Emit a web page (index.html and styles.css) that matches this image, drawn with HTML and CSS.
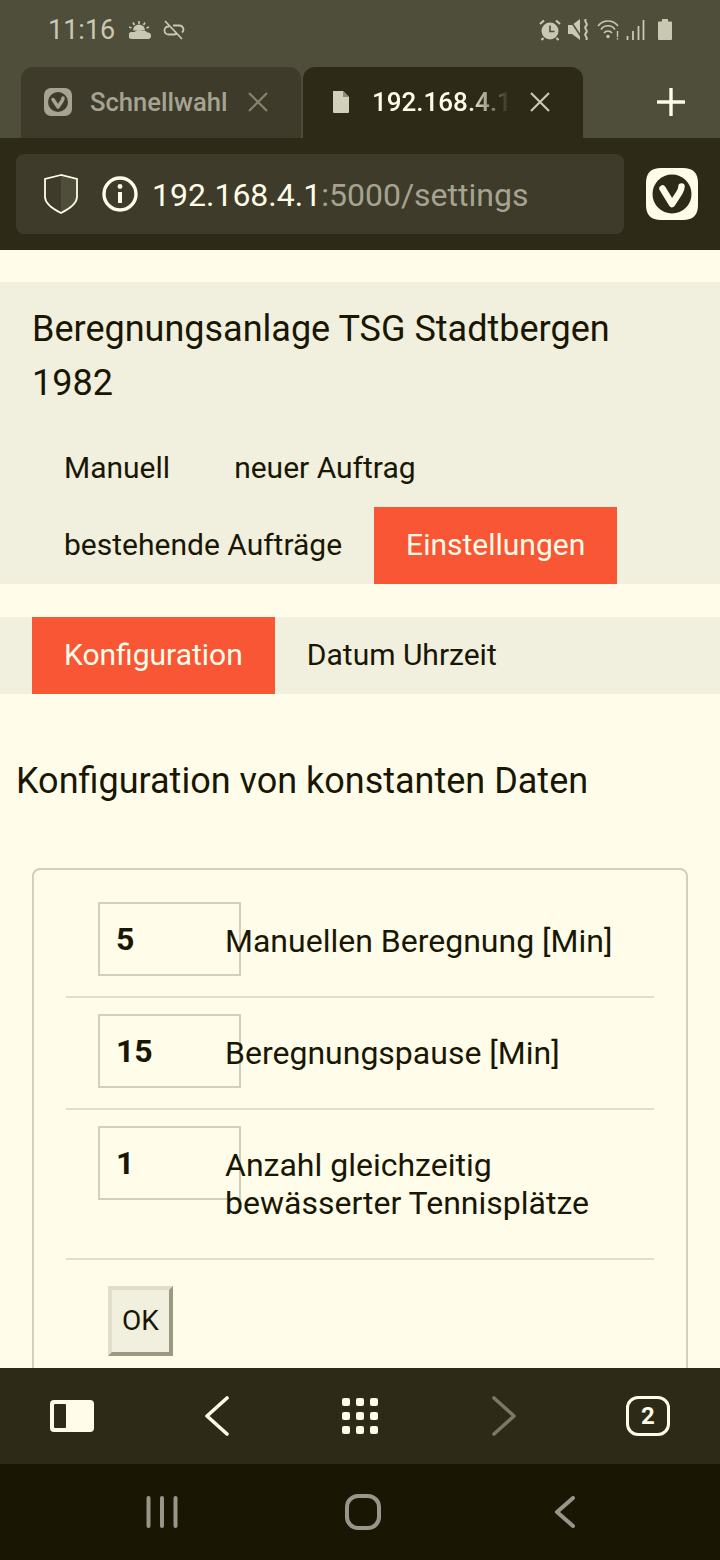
FILE: index.html
```html
<!DOCTYPE html>
<html lang="de">
<head>
  <meta charset="UTF-8" />
  <meta name="viewport" content="width=device-width, initial-scale=1.0"/>
  <title>Beregnungsanlage</title>
  <link rel="stylesheet" href="styles.css">
</head>
<body>
  <div class="phone">
    <div class="statusbar">
      <div class="status-left">
        <span class="clock">11:16</span>
        <svg class="ic-weather" width="22" height="18" viewBox="0 0 22 18"><path d="M10 0v3M4 1.500l1.500 2.500M16 1.500L14.500 4M0 6l2.500 1M20 6l-2.500 1" stroke="#c9c8b2" stroke-width="1.600" fill="none"/><path d="M4 9.500a6 6 0 0 1 12 0z" fill="#c9c8b2"/><path d="M3 18a3.500 3.500 0 0 1 0-7h2.500a6 6 0 0 1 8-1 4.500 4.500 0 0 1 5 1.500 3.300 3.300 0 0 1 1 6.500z" fill="#c9c8b2"/></svg>
        <svg class="ic-link" width="22" height="20" viewBox="0 0 22 20"><path d="M6 6.500H5.500a4 4 0 0 0 0 8H11a4 4 0 0 0 2.500-1M10 5.500h6a4 4 0 0 1 3 7M2 1l17 18" stroke="#c9c8b2" stroke-width="1.800" fill="none"/></svg>
      </div>
      <div class="status-right">
        <svg width="22" height="22" viewBox="0 0 22 22"><circle cx="11" cy="12" r="8.500" fill="#c9c8b2"/><path d="M11 6.500v6h4.500" stroke="#4f4e3b" stroke-width="1.600" fill="none"/><path d="M1 5l4-3.500M21 5l-4-3.500M4.500 19L2.500 21M17.500 19l2 2" stroke="#c9c8b2" stroke-width="2.200" fill="none"/></svg>
        <svg width="22" height="21" viewBox="0 0 22 21"><path d="M0 6h4l8-6v21l-8-6H0z" fill="#c9c8b2"/><path d="M2 1l12 18" stroke="#4f4e3b" stroke-width="1.500"/><path d="M18 0c-3 3 3 4 0 7s3 4 0 7 3 4 0 7" stroke="#c9c8b2" stroke-width="2" fill="none"/></svg>
        <svg width="22" height="20" viewBox="0 0 22 20"><path d="M1 6a12.500 12.500 0 0 1 20 0M4 9.500a8.500 8.500 0 0 1 14 0M7 13a5 5 0 0 1 8 0" stroke="#c9c8b2" stroke-width="1.500" fill="none"/><circle cx="11" cy="16.500" r="1.700" fill="#c9c8b2"/><path d="M20.500 11v6M20.500 18v1.500" stroke="#c9c8b2" stroke-width="1.400"/></svg>
        <svg class="ic-signal" width="19" height="20" viewBox="0 0 19 20"><path d="M1.500 16v4M7 11v9M12.500 6v14M17.500 0v20" stroke="#c9c8b2" stroke-width="1.800"/></svg>
        <svg class="ic-battery" width="14" height="21" viewBox="0 0 14 21"><path d="M4 0h6v2.500h3a1 1 0 0 1 1 1V20a1 1 0 0 1-1 1H1a1 1 0 0 1-1-1V3.500a1 1 0 0 1 1-1h3z" fill="#c9c8b2"/></svg>
      </div>
    </div>

    <div class="tabbar">
      <div class="tab">
        <svg class="favicon" width="28" height="28" viewBox="0 0 28 28"><rect width="28" height="28" rx="7" fill="#a5a493"/><circle cx="14" cy="14" r="10" fill="#3e3b2a"/><path d="M9 11.500l5 7.500 4-6c.7-1 1-2 1-3" stroke="#a5a493" stroke-width="3.500" stroke-linecap="round" stroke-linejoin="round" fill="none"/></svg>
        <span class="tab-title">Schnellwahl</span>
        <svg class="tab-close" width="22" height="22" viewBox="0 0 22 22"><path d="M2 2l18 18M20 2L2 20" stroke="#86846f" stroke-width="2.200"/></svg>
      </div>
      <div class="tab tab-active">
        <svg class="page-ic" width="18" height="22" viewBox="0 0 18 22"><path d="M1 0h10l6 6v15a1 1 0 0 1-1 1H2a1 1 0 0 1-1-1z" fill="#d2d0ba"/><path d="M11 0v6h6" fill="#8e8c78"/></svg>
        <span class="tab-title">192.168.4.1</span>
        <svg class="tab-close" width="22" height="22" viewBox="0 0 22 22"><path d="M2 2l18 18M20 2L2 20" stroke="#c9c8b2" stroke-width="2.200"/></svg>
      </div>
      <div class="newtab">
        <svg width="28" height="28" viewBox="0 0 28 28"><path d="M14 1v26M1 14h26" stroke="#fffde9" stroke-width="3.400" stroke-linecap="round"/></svg>
      </div>
    </div>

    <div class="addressbar">
      <div class="urlfield">
        <svg class="shield" width="34" height="40" viewBox="0 0 34 40"><path d="M17 1L33 5v18c0 7-8 12-16 16z" fill="#4f4e3b"/><path d="M17 1L1 5v18c0 7 8 12 16 16 8-4 16-9 16-16V5z" stroke="#fffde9" stroke-width="1.800" fill="none"/></svg>
        <svg class="info" width="36" height="36" viewBox="0 0 36 36"><circle cx="18" cy="18" r="16" stroke="#fffde9" stroke-width="3.400" fill="none"/><path d="M18 16v11" stroke="#fffde9" stroke-width="4"/><circle cx="18" cy="10.500" r="2.400" fill="#fffde9"/></svg>
        <span class="url"><span class="url-host">192.168.4.1</span>:5000/settings</span>
      </div>
      <svg class="vivaldi" width="52" height="52" viewBox="0 0 52 52"><path d="M15 0h22c10 0 15 5 15 15v22c0 10-5 15-15 15H15C5 52 0 47 0 37V15C0 5 5 0 15 0z" fill="#fffde9"/><circle cx="26" cy="26" r="19.500" fill="#2d2a18"/><path d="M16.500 20.500L26 36l7.500-11.500c1.500-2.500 2-4 2-6" stroke="#fffde9" stroke-width="6.500" stroke-linecap="round" stroke-linejoin="round" fill="none"/></svg>
    </div>

    <main class="page">
      <header class="site-head">
        <h1>Beregnungsanlage TSG Stadtbergen 1982</h1>
        <nav class="menu">
          <a href="#">Manuell</a>
          <a href="#">neuer Auftrag</a>
          <a href="#">bestehende Aufträge</a>
          <a href="#" class="current">Einstellungen</a>
        </nav>
      </header>

      <nav class="menu submenu">
        <a href="#" class="current">Konfiguration</a>
        <a href="#">Datum Uhrzeit</a>
      </nav>

      <h2>Konfiguration von konstanten Daten</h2>

      <form class="config">
        <div class="row">
          <input type="text" value="5" />
          <label>Manuellen Beregnung [Min]</label>
        </div>
        <div class="row">
          <input type="text" value="15" />
          <label>Beregnungspause [Min]</label>
        </div>
        <div class="row">
          <input type="text" value="1" />
          <label>Anzahl gleichzeitig bewässerter Tennisplätze</label>
        </div>
        <button type="button">OK</button>
      </form>
    </main>

    <div class="toolbar">
      <svg width="44" height="32" viewBox="0 0 44 32"><rect width="44" height="32" rx="4" fill="#fffde9"/><rect x="4" y="4" width="12" height="24" rx="1" fill="#2d2a18"/></svg>
      <svg class="tb-back" width="24" height="40" viewBox="0 0 24 40"><path d="M22 2L2 20l20 18" stroke="#fffde9" stroke-width="3.600" stroke-linecap="round" stroke-linejoin="round" fill="none"/></svg>
      <svg class="tb-grid" width="36" height="36" viewBox="0 0 36 36" fill="#fffde9"><rect width="8" height="8" rx="2"/><rect x="14" width="8" height="8" rx="2"/><rect x="28" width="8" height="8" rx="2"/><rect y="14" width="8" height="8" rx="2"/><rect x="14" y="14" width="8" height="8" rx="2"/><rect x="28" y="14" width="8" height="8" rx="2"/><rect y="28" width="8" height="8" rx="2"/><rect x="14" y="28" width="8" height="8" rx="2"/><rect x="28" y="28" width="8" height="8" rx="2"/></svg>
      <svg class="tb-forward" width="24" height="40" viewBox="0 0 24 40"><path d="M2 2l20 18L2 38" stroke="#7b7966" stroke-width="3.600" stroke-linecap="round" stroke-linejoin="round" fill="none"/></svg>
      <span class="tabcount">2</span>
    </div>

    <div class="navbar">
      <svg width="32" height="32" viewBox="0 0 32 32"><path d="M2.500 2v28M16 2v28M29.500 2v28" stroke="#98968a" stroke-width="4" stroke-linecap="round"/></svg>
      <svg class="nav-home" width="36" height="36" viewBox="0 0 36 36"><rect x="2" y="2" width="32" height="32" rx="11" stroke="#98968a" stroke-width="4" fill="none"/></svg>
      <svg class="nav-back" width="20" height="32" viewBox="0 0 20 32"><path d="M18 2L2 16l16 14" stroke="#98968a" stroke-width="4" stroke-linecap="round" stroke-linejoin="round" fill="none"/></svg>
    </div>
  </div>
</body>
</html>
```

FILE: styles.css
```css
* {
  box-sizing: border-box;
}

body {
  margin: 0;
  font-family: Roboto, "Liberation Sans", sans-serif;
  background: #fffde9;
  color: #191704;
}

.phone {
  display: flex;
  flex-direction: column;
  width: 720px;
  height: 1560px;
  overflow: hidden;
}

/* status bar */
.statusbar {
  display: flex;
  justify-content: space-between;
  align-items: center;
  height: 67px;
  padding: 0 48px 8px 48px;
  background: #4f4e3b;
  color: #c9c8b2;
}

.status-left,
.status-right {
  display: flex;
  align-items: center;
}

.status-left {
  gap: 14px;
}

.ic-weather {
  margin-right: -2px;
}

.status-right {
  gap: 7px;
}

.clock {
  font-size: 27px;
}

.ic-signal {
  margin-left: 0;
}

.ic-battery {
  margin-left: 6px;
}

/* tabs */
.tabbar {
  display: flex;
  gap: 2px;
  height: 71px;
  padding-left: 21px;
  background: #4f4e3b;
}

.tab {
  display: flex;
  align-items: center;
  width: 280px;
  padding: 0 0 2px 23px;
  border-radius: 12px 12px 0 0;
  background: #3e3b2a;
  color: #a5a493;
}

.tab-title {
  width: 137px;
  margin-left: 18px;
  font-size: 25.600px;
  font-weight: 500;
  line-height: 30px;
  white-space: nowrap;
}

.tab-close {
  margin-left: 20px;
}

.tab-active {
  padding-left: 29px;
  background: #2d2a18;
  color: #fffde9;
}

.tab-active .tab-title {
  width: 138px;
  margin-left: 22px;
  font-size: 26px;
  -webkit-mask-image: linear-gradient(to right, #000 70%, transparent 100%);
  mask-image: linear-gradient(to right, #000 70%, transparent 100%);
}

.tab-active .tab-close {
  margin-left: 19px;
}

.newtab {
  display: flex;
  flex: 1;
  justify-content: center;
  align-items: center;
  padding: 0 0 2px 36px;
}

/* address bar */
.addressbar {
  display: flex;
  align-items: center;
  height: 112px;
  padding: 0 22px 0 16px;
  background: #2d2a18;
}

.urlfield {
  display: flex;
  align-items: center;
  width: 608px;
  height: 80px;
  padding-left: 28px;
  border-radius: 8px;
  background: #3e3b2a;
}

.info {
  margin-left: 24px;
}

.url {
  margin-left: 14px;
  padding-top: 2px;
  font-size: 32px;
  color: #a5a493;
}

.url-host {
  color: #fffde9;
}

.vivaldi {
  margin-left: auto;
}

/* page */
.page {
  flex: 1;
  min-height: 0;
  padding-top: 32px;
  overflow: hidden;
  background: #fffde9;
}

.site-head {
  padding-top: 20px;
  background: #f1efdd;
}

h1 {
  margin: 0 32px 20px 32px;
  font-size: 36px;
  font-weight: 400;
  line-height: 54px;
}

.menu {
  display: flex;
  flex-wrap: wrap;
  padding-left: 32px;
  background: #f1efdd;
}

.menu a {
  padding: 0 32px 2px;
  font-size: 30px;
  line-height: 75px;
  color: #191704;
  text-decoration: none;
}

.menu a.current {
  background: #f95635;
  color: #fffde9;
}

.submenu {
  margin-top: 33px;
}

h2 {
  margin: 0 0 0 16px;
  padding-top: 67px;
  font-size: 36px;
  font-weight: 400;
  line-height: 40px;
}

.config {
  margin: 67px 32px 0;
  padding: 32px 32px 40px;
  border: 2px solid #d2d0ba;
  border-radius: 8px;
}

.row {
  display: flex;
  align-items: flex-start;
  margin-bottom: 16px;
  padding-left: 32px;
  border-bottom: 2px solid #e2e0cc;
}

.row input {
  flex: none;
  width: 143px;
  height: 74px;
  margin-right: -16px;
  padding: 0 16px 1px;
  border: 2px solid #d2d0ba;
  background: transparent;
  font-family: inherit;
  font-size: 32px;
  font-weight: 700;
  color: #191704;
  outline: none;
}

.row label {
  padding: 20px 0 36px;
  font-size: 32px;
  line-height: 38px;
}

.config button {
  display: block;
  width: 65px;
  height: 70px;
  margin: 26px 0 0 42px;
  padding: 0 0 2px;
  border: 4px solid;
  border-color: #e0decb #9b9984 #9b9984 #e0decb;
  background: #f1efdd;
  font-family: inherit;
  font-size: 28px;
  color: #191704;
}

/* bottom bars */
.toolbar {
  display: flex;
  align-items: center;
  flex: none;
  height: 96px;
  padding-left: 50px;
  background: #2d2a18;
}

.tb-back {
  margin-left: 111px;
}

.tb-grid {
  margin-left: 113px;
}

.tb-forward {
  margin-left: 114px;
}

.tabcount {
  display: flex;
  justify-content: center;
  align-items: center;
  width: 44px;
  height: 40px;
  margin-left: 110px;
  border: 3px solid #fffde9;
  border-radius: 12px;
  font-size: 24px;
  font-weight: 700;
  color: #fffde9;
}

.navbar {
  display: flex;
  align-items: center;
  flex: none;
  height: 96px;
  padding-left: 146px;
  background: #191704;
}

.nav-home {
  margin-left: 167px;
}

.nav-back {
  margin-left: 174px;
}
```
